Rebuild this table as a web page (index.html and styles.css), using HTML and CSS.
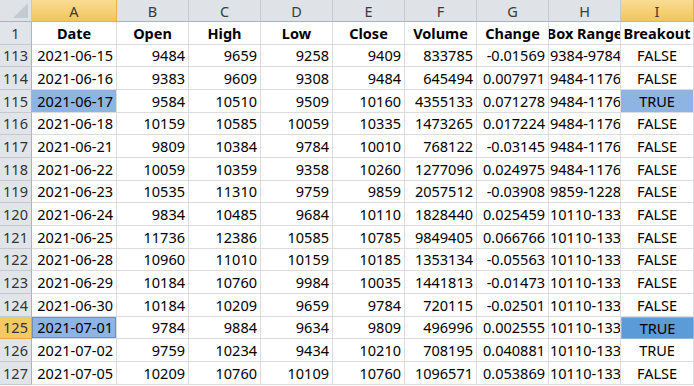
FILE: index.html
```html
<!DOCTYPE html>
<html lang="en">
<head>
    <meta charset="UTF-8">
    <title>Breakout sheet</title>
    <link rel="stylesheet" href="styles.css">
</head>
<body>

<div class="sheet">
    <div class="row col-heads">
        <div class="corner"><span class="corner-mark"></span></div>
        <div class="ch ch-sel">A</div>
        <div class="ch">B</div>
        <div class="ch">C</div>
        <div class="ch">D</div>
        <div class="ch">E</div>
        <div class="ch">F</div>
        <div class="ch">G</div>
        <div class="ch">H</div>
        <div class="ch ch-sel">I</div>
    </div>

    <div class="row">
        <div class="rh">1</div>
        <div class="cell head">Date</div>
        <div class="cell head">Open</div>
        <div class="cell head">High</div>
        <div class="cell head">Low</div>
        <div class="cell head">Close</div>
        <div class="cell head">Volume</div>
        <div class="cell head">Change</div>
        <div class="cell head">Box Range</div>
        <div class="cell head">Breakout</div>
    </div>

    <div class="row">
        <div class="rh">113</div>
        <div class="cell num">2021-06-15</div>
        <div class="cell num">9484</div>
        <div class="cell num">9659</div>
        <div class="cell num">9258</div>
        <div class="cell num">9409</div>
        <div class="cell num">833785</div>
        <div class="cell num">-0.01569</div>
        <div class="cell txt">9384-9784</div>
        <div class="cell ctr">FALSE</div>
    </div>

    <div class="row">
        <div class="rh">114</div>
        <div class="cell num">2021-06-16</div>
        <div class="cell num">9383</div>
        <div class="cell num">9609</div>
        <div class="cell num">9308</div>
        <div class="cell num">9484</div>
        <div class="cell num">645494</div>
        <div class="cell num">0.007971</div>
        <div class="cell txt">9484-1176</div>
        <div class="cell ctr">FALSE</div>
    </div>

    <div class="row">
        <div class="rh">115</div>
        <div class="cell num picked">2021-06-17</div>
        <div class="cell num">9584</div>
        <div class="cell num">10510</div>
        <div class="cell num">9509</div>
        <div class="cell num">10160</div>
        <div class="cell num">4355133</div>
        <div class="cell num">0.071278</div>
        <div class="cell txt">9484-1176</div>
        <div class="cell ctr picked">TRUE</div>
    </div>

    <div class="row">
        <div class="rh">116</div>
        <div class="cell num">2021-06-18</div>
        <div class="cell num">10159</div>
        <div class="cell num">10585</div>
        <div class="cell num">10059</div>
        <div class="cell num">10335</div>
        <div class="cell num">1473265</div>
        <div class="cell num">0.017224</div>
        <div class="cell txt">9484-1176</div>
        <div class="cell ctr">FALSE</div>
    </div>

    <div class="row">
        <div class="rh">117</div>
        <div class="cell num">2021-06-21</div>
        <div class="cell num">9809</div>
        <div class="cell num">10384</div>
        <div class="cell num">9784</div>
        <div class="cell num">10010</div>
        <div class="cell num">768122</div>
        <div class="cell num">-0.03145</div>
        <div class="cell txt">9484-1176</div>
        <div class="cell ctr">FALSE</div>
    </div>

    <div class="row">
        <div class="rh">118</div>
        <div class="cell num">2021-06-22</div>
        <div class="cell num">10059</div>
        <div class="cell num">10359</div>
        <div class="cell num">9358</div>
        <div class="cell num">10260</div>
        <div class="cell num">1277096</div>
        <div class="cell num">0.024975</div>
        <div class="cell txt">9484-1176</div>
        <div class="cell ctr">FALSE</div>
    </div>

    <div class="row">
        <div class="rh">119</div>
        <div class="cell num">2021-06-23</div>
        <div class="cell num">10535</div>
        <div class="cell num">11310</div>
        <div class="cell num">9759</div>
        <div class="cell num">9859</div>
        <div class="cell num">2057512</div>
        <div class="cell num">-0.03908</div>
        <div class="cell txt">9859-1228</div>
        <div class="cell ctr">FALSE</div>
    </div>

    <div class="row">
        <div class="rh">120</div>
        <div class="cell num">2021-06-24</div>
        <div class="cell num">9834</div>
        <div class="cell num">10485</div>
        <div class="cell num">9684</div>
        <div class="cell num">10110</div>
        <div class="cell num">1828440</div>
        <div class="cell num">0.025459</div>
        <div class="cell txt">10110-133</div>
        <div class="cell ctr">FALSE</div>
    </div>

    <div class="row">
        <div class="rh">121</div>
        <div class="cell num">2021-06-25</div>
        <div class="cell num">11736</div>
        <div class="cell num">12386</div>
        <div class="cell num">10585</div>
        <div class="cell num">10785</div>
        <div class="cell num">9849405</div>
        <div class="cell num">0.066766</div>
        <div class="cell txt">10110-133</div>
        <div class="cell ctr">FALSE</div>
    </div>

    <div class="row">
        <div class="rh">122</div>
        <div class="cell num">2021-06-28</div>
        <div class="cell num">10960</div>
        <div class="cell num">11010</div>
        <div class="cell num">10159</div>
        <div class="cell num">10185</div>
        <div class="cell num">1353134</div>
        <div class="cell num">-0.05563</div>
        <div class="cell txt">10110-133</div>
        <div class="cell ctr">FALSE</div>
    </div>

    <div class="row">
        <div class="rh">123</div>
        <div class="cell num">2021-06-29</div>
        <div class="cell num">10184</div>
        <div class="cell num">10760</div>
        <div class="cell num">9984</div>
        <div class="cell num">10035</div>
        <div class="cell num">1441813</div>
        <div class="cell num">-0.01473</div>
        <div class="cell txt">10110-133</div>
        <div class="cell ctr">FALSE</div>
    </div>

    <div class="row">
        <div class="rh">124</div>
        <div class="cell num">2021-06-30</div>
        <div class="cell num">10184</div>
        <div class="cell num">10209</div>
        <div class="cell num">9659</div>
        <div class="cell num">9784</div>
        <div class="cell num">720115</div>
        <div class="cell num">-0.02501</div>
        <div class="cell txt">10110-133</div>
        <div class="cell ctr">FALSE</div>
    </div>

    <div class="row">
        <div class="rh rh-sel">125</div>
        <div class="cell num picked active">2021-07-01</div>
        <div class="cell num">9784</div>
        <div class="cell num">9884</div>
        <div class="cell num">9634</div>
        <div class="cell num">9809</div>
        <div class="cell num">496996</div>
        <div class="cell num">0.002555</div>
        <div class="cell txt">10110-133</div>
        <div class="cell ctr picked-dark">TRUE</div>
    </div>

    <div class="row">
        <div class="rh">126</div>
        <div class="cell num">2021-07-02</div>
        <div class="cell num">9759</div>
        <div class="cell num">10234</div>
        <div class="cell num">9434</div>
        <div class="cell num">10210</div>
        <div class="cell num">708195</div>
        <div class="cell num">0.040881</div>
        <div class="cell txt">10110-133</div>
        <div class="cell ctr">TRUE</div>
    </div>

    <div class="row">
        <div class="rh">127</div>
        <div class="cell num">2021-07-05</div>
        <div class="cell num">10209</div>
        <div class="cell num">10760</div>
        <div class="cell num">10109</div>
        <div class="cell num">10760</div>
        <div class="cell num">1096571</div>
        <div class="cell num">0.053869</div>
        <div class="cell txt">10110-133</div>
        <div class="cell ctr">FALSE</div>
    </div>
</div>

</body>
</html>
```

FILE: styles.css
```css
body {
    margin: 0;
    background-color: #fff;
    font-family: 'Noto Sans', 'Open Sans', sans-serif;
    font-size: 14.5px;
    color: #000;
    overflow: hidden;
}

.sheet {
    width: 694px;
}

.row {
    display: grid;
    grid-template-columns: 32px 85px repeat(7, 72px) 73px;
    height: 22.67px;
}

.col-heads {
    height: 22px;
}

/* column letters */
.corner {
    position: relative;
    background-color: #dfe3e8;
    border-right: 1px solid #c4c9cf;
    border-bottom: 1px solid #a9b3bf;
}

.corner-mark {
    position: absolute;
    right: 3px;
    bottom: 3px;
    width: 0;
    height: 0;
    border-left: 15px solid transparent;
    border-bottom: 15px solid #c5cad0;
}

.ch {
    display: flex;
    align-items: center;
    justify-content: center;
    background-color: #dfe3e8;
    color: #3b3b3b;
    border-right: 1px solid #c4c9cf;
    border-bottom: 1px solid #a9b3bf;
}

.ch-sel {
    background: linear-gradient(#f9dd93, #f2c55c);
    border-right-color: #e3b24a;
    border-bottom-color: #e3b24a;
}

/* row numbers */
.rh {
    display: flex;
    align-items: center;
    justify-content: center;
    background-color: #e1e5ea;
    color: #333;
    border-right: 1px solid #a9b3bf;
    border-bottom: 1px solid #c4c9cf;
}

.rh-sel {
    background-color: #f5c962;
    border-right-color: #e3a93a;
    border-bottom-color: #e3a93a;
}

/* cells */
.cell {
    display: flex;
    align-items: center;
    padding: 0 3px;
    white-space: nowrap;
    overflow: hidden;
    border-right: 1px solid #dadcdd;
    border-bottom: 1px solid #dadcdd;
}

.head {
    justify-content: center;
    font-weight: bold;
    padding: 0;
}

.num {
    justify-content: flex-end;
}

.txt {
    justify-content: flex-start;
    padding: 0 0 0 1px;
}

.ctr {
    justify-content: center;
}

.picked {
    background-color: #8db4e2;
}

.picked-dark {
    background-color: #5b9bd8;
    border: 1px solid #8db4e2;
}

.active {
    box-shadow: inset 0 0 0 1px #7090b8;
}
```
